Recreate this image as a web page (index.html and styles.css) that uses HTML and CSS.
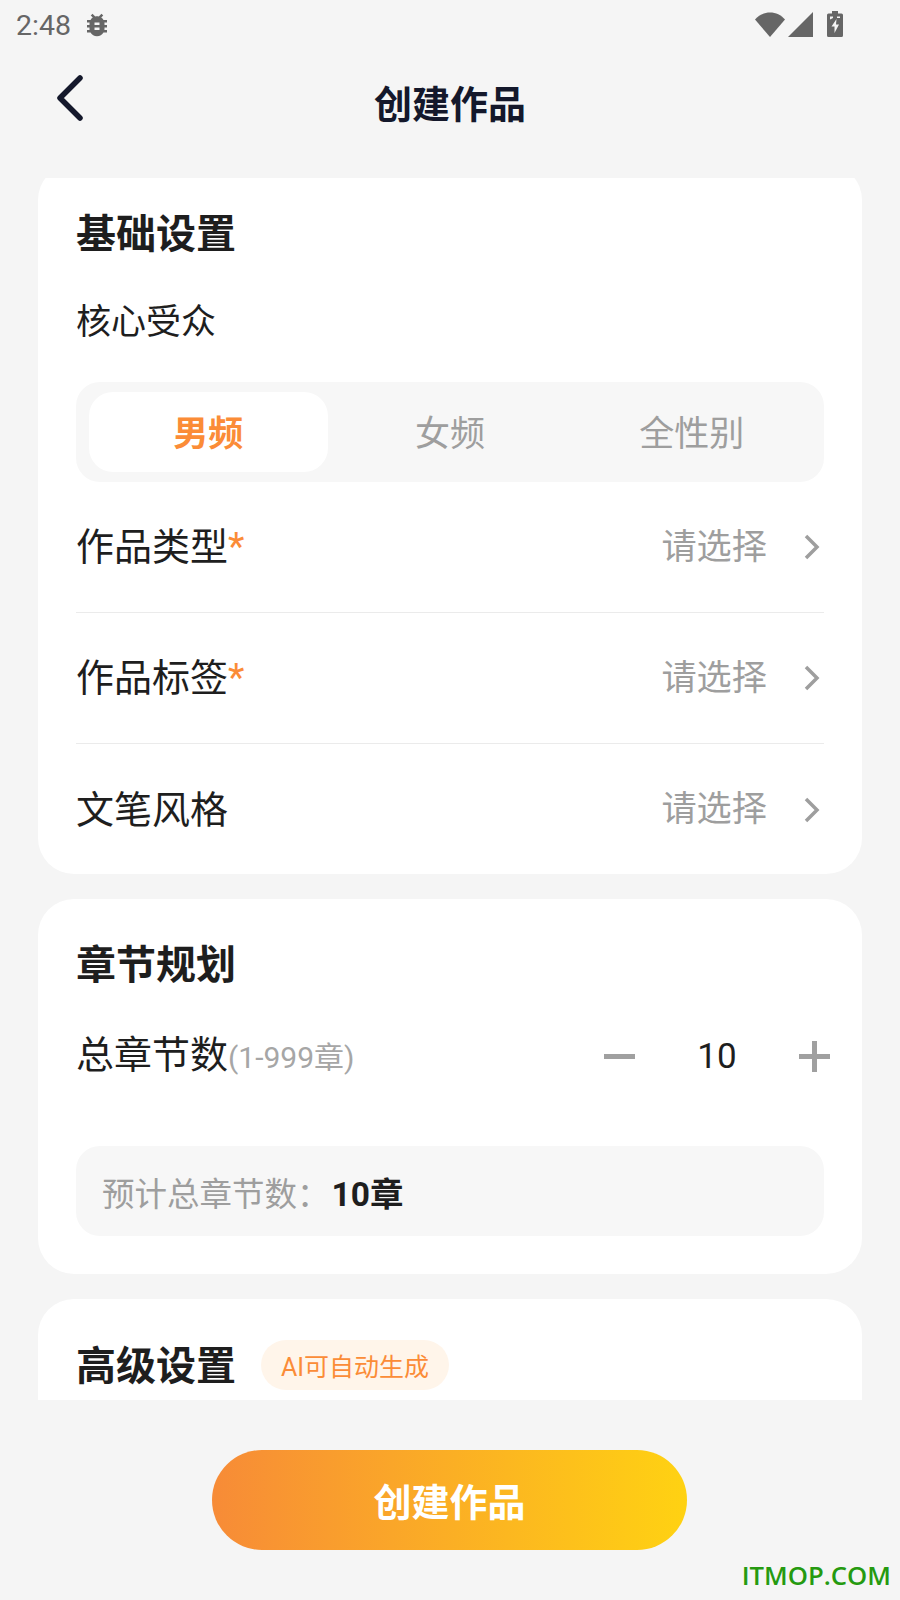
FILE: index.html
```html
<!DOCTYPE html>
<html lang="zh-CN">
<head>
    <meta charset="UTF-8">
    <meta name="viewport" content="width=device-width, initial-scale=1.0">
    <title>创建作品</title>
    <link rel="stylesheet" href="styles.css">
</head>
<body>
<div class="screen">
    <div class="status-bar">
        <div class="status-left">
            <span class="status-time">2:48</span>
            <svg class="icon-bug" viewBox="0 0 24 24"><path d="M20 8h-2.8c-.45-.78-1.07-1.45-1.82-1.96L17 4.41 15.59 3l-2.17 2.17C12.96 5.06 12.49 5 12 5s-.96.06-1.41.17L8.41 3 7 4.41l1.62 1.63C7.88 6.55 7.26 7.22 6.81 8H4v2h2.09c-.05.33-.09.66-.09 1v1H4v2h2v1c0 .34.04.67.09 1H4v2h2.81c1.04 1.79 2.97 3 5.19 3s4.15-1.21 5.19-3H20v-2h-2.09c.05-.33.09-.66.09-1v-1h2v-2h-2v-1c0-.34-.04-.67-.09-1H20V8zm-6 8h-4v-2h4v2zm0-4h-4v-2h4v2z"/></svg>
        </div>
        <div class="status-right">
            <svg class="icon-wifi" viewBox="0 0 30 25"><path d="M15 25 0 7.500C4 3 9 .5 15 .5S26 3 30 7.500z"/></svg>
            <svg class="icon-signal" viewBox="0 0 25 25"><path d="M25 0v25H0z"/></svg>
            <svg class="icon-battery" viewBox="0 0 16 26"><path fill-rule="evenodd" d="M5 0h6v2.500h3.500a1.500 1.500 0 0 1 1.500 1.500v20.500a1.500 1.500 0 0 1-1.500 1.500h-13a1.500 1.500 0 0 1-1.500-1.500v-20.500a1.500 1.500 0 0 1 1.500-1.500h3.500z M9.500 8 4.500 15.500h3v6.500l4.500-8.500h-3z M3 5.500v3l3-1.500v-1.500z M10 5.500v1.500h3v3.500v-5z"/></svg>
        </div>
    </div>

    <header class="top-bar">
        <svg class="icon-back" viewBox="0 0 30 46"><path d="M25 3 5 23l20 20"/></svg>
        <h1 class="page-title">创建作品</h1>
    </header>

    <main class="scroll-area">
        <section class="card card-first">
            <h2 class="card-title">基础设置</h2>
            <div class="field-label">核心受众</div>
            <div class="segment">
                <div class="segment-item selected">男频</div>
                <div class="segment-item">女频</div>
                <div class="segment-item">全性别</div>
            </div>
            <div class="select-row">
                <span class="row-label">作品类型<em class="required">*</em></span>
                <span class="row-value">请选择</span>
                <svg class="icon-chevron" viewBox="0 0 20 28"><path d="M4 3l11 11L4 25"/></svg>
            </div>
            <div class="select-row">
                <span class="row-label">作品标签<em class="required">*</em></span>
                <span class="row-value">请选择</span>
                <svg class="icon-chevron" viewBox="0 0 20 28"><path d="M4 3l11 11L4 25"/></svg>
            </div>
            <div class="select-row">
                <span class="row-label">文笔风格</span>
                <span class="row-value">请选择</span>
                <svg class="icon-chevron" viewBox="0 0 20 28"><path d="M4 3l11 11L4 25"/></svg>
            </div>
        </section>

        <section class="card card-chapters">
            <h2 class="card-title">章节规划</h2>
            <div class="stepper-row">
                <span class="row-label">总章节数<small class="range-hint">(1-999章)</small></span>
                <div class="stepper">
                    <span class="step-btn step-minus"></span>
                    <span class="step-value">10</span>
                    <span class="step-btn step-plus"></span>
                </div>
            </div>
            <div class="summary-box">预计总章节数：<strong>10章</strong></div>
        </section>

        <section class="card card-advanced">
            <div class="title-line">
                <h2 class="card-title">高级设置</h2>
                <span class="ai-badge">AI可自动生成</span>
            </div>
        </section>
    </main>

    <footer class="bottom-bar">
        <button type="button" class="create-btn">创建作品</button>
    </footer>

    <div class="watermark">ITMOP.COM</div>
</div>
</body>
</html>
```

FILE: styles.css
```css
* {
    box-sizing: border-box;
}
body {
    margin: 0;
    background: #f5f5f5;
    font-family: Roboto, "Noto Sans CJK SC", sans-serif;
    color: #1e1e1e;
}
.screen {
    position: relative;
    width: 900px;
    height: 1600px;
    overflow: hidden;
    background: #f5f5f5;
}

/* status bar */
.status-bar {
    height: 50px;
    padding: 0 16px;
    display: flex;
    justify-content: space-between;
    align-items: center;
}
.status-left {
    display: flex;
    align-items: center;
    gap: 11px;
}
.status-time {
    font-size: 28.5px;
    color: #666;
}
.icon-bug {
    width: 30px;
    height: 30px;
    fill: #666;
}
.status-right {
    display: flex;
    align-items: center;
    margin-right: 41px;
    padding-bottom: 2px;
}
.status-right svg {
    fill: #666;
}
.icon-wifi {
    width: 30px;
    height: 25px;
}
.icon-signal {
    width: 25px;
    height: 25px;
    margin-left: 3px;
}
.icon-battery {
    width: 16px;
    height: 26px;
    margin-left: 14px;
}

/* header */
.top-bar {
    position: relative;
    height: 128px;
    padding-bottom: 26px;
    display: flex;
    align-items: center;
    justify-content: center;
}
.icon-back {
    position: absolute;
    left: 55px;
    top: 25px;
    width: 30px;
    height: 46px;
    fill: none;
    stroke: #14182b;
    stroke-width: 5.5;
    stroke-linecap: round;
    stroke-linejoin: round;
}
.page-title {
    margin: 0;
    font-size: 38px;
    font-weight: 700;
    color: #14182b;
}

/* cards */
.scroll-area {
    height: 1222px;
    padding: 0 38px;
    overflow: hidden;
}
.card {
    background: #fff;
    border-radius: 36px;
    padding: 0 38px;
    margin-bottom: 25px;
}
.card-first {
    margin-top: -14px;
    height: 710px;
    padding-top: 43px;
}
.card-chapters {
    height: 375px;
    padding-top: 39px;
}
.card-advanced {
    height: 200px;
    padding-top: 40px;
}
.card-title {
    margin: 0;
    font-size: 40px;
    line-height: 56px;
    font-weight: 700;
    color: #1e1e1e;
}
.field-label {
    margin-top: 32px;
    font-size: 35px;
    line-height: 56px;
}

/* audience switch */
.segment {
    margin-top: 31px;
    height: 100px;
    padding: 10px 13px;
    display: grid;
    grid-template-columns: repeat(3, 1fr);
    gap: 3px;
    background: #f7f7f7;
    border-radius: 24px;
}
.segment-item {
    display: flex;
    align-items: center;
    justify-content: center;
    padding-bottom: 3px;
    font-size: 35px;
    color: #9e9e9e;
    border-radius: 24px;
}
.segment-item.selected {
    background: #fff;
    color: #fb8c37;
    font-weight: 700;
}

/* select rows */
.select-row {
    height: 131px;
    display: flex;
    align-items: center;
    border-bottom: 1px solid #ebebeb;
}
.select-row:last-child {
    border-bottom: none;
}
.row-label {
    flex: 1;
    font-size: 38px;
    line-height: 52px;
}
.required {
    font-style: normal;
    color: #fb8c37;
}
.row-value {
    font-size: 35.2px;
    color: #9e9e9e;
    position: relative;
    top: -4px;
}
.icon-chevron {
    width: 20px;
    height: 28px;
    margin-left: 35px;
    margin-right: 2px;
    fill: none;
    stroke: #9e9e9e;
    stroke-width: 3.5;
}

/* chapter stepper */
.stepper-row {
    margin-top: 28px;
    height: 68px;
    display: flex;
    align-items: center;
}
.range-hint {
    font-size: 30px;
    color: #a6a6a6;
}
.stepper {
    display: flex;
    align-items: center;
    margin-right: -6px;
}
.step-btn {
    position: relative;
    width: 31px;
    height: 31px;
}
.step-btn::before,
.step-plus::after {
    content: "";
    position: absolute;
    background: #a0a0a0;
}
.step-btn::before {
    left: 0;
    right: 0;
    top: 13px;
    height: 5px;
}
.step-plus::after {
    top: 0;
    bottom: 0;
    left: 13px;
    width: 5px;
}
.step-value {
    width: 164px;
    text-align: center;
    font-size: 35px;
}
.summary-box {
    margin-top: 56px;
    height: 90px;
    padding: 0 26px;
    display: flex;
    align-items: center;
    background: #f7f7f7;
    border-radius: 24px;
    font-size: 32.5px;
    color: #9e9e9e;
}
.summary-box strong {
    margin-left: 2px;
    font-size: 33.5px;
    color: #1e1e1e;
}

/* advanced */
.title-line {
    display: flex;
    align-items: center;
    gap: 25px;
}
.ai-badge {
    height: 50px;
    margin-top: -4px;
    padding: 0 20px;
    display: flex;
    align-items: center;
    background: #fff5ea;
    border-radius: 25px;
    font-size: 25px;
    color: #fb8c37;
}

/* bottom button */
.bottom-bar {
    padding-top: 50px;
    padding-right: 1px;
    display: flex;
    justify-content: center;
}
.create-btn {
    width: 475px;
    height: 100px;
    border: none;
    border-radius: 50px;
    background: linear-gradient(90deg, #f78b37, #ffd212);
    font-family: inherit;
    font-size: 38px;
    font-weight: 700;
    color: #fff;
    padding-bottom: 2px;
}
.watermark {
    position: absolute;
    right: 9px;
    bottom: 7px;
    font-family: "Open Sans", sans-serif;
    font-size: 25.7px;
    font-weight: 600;
    color: #259a10;
}
```
